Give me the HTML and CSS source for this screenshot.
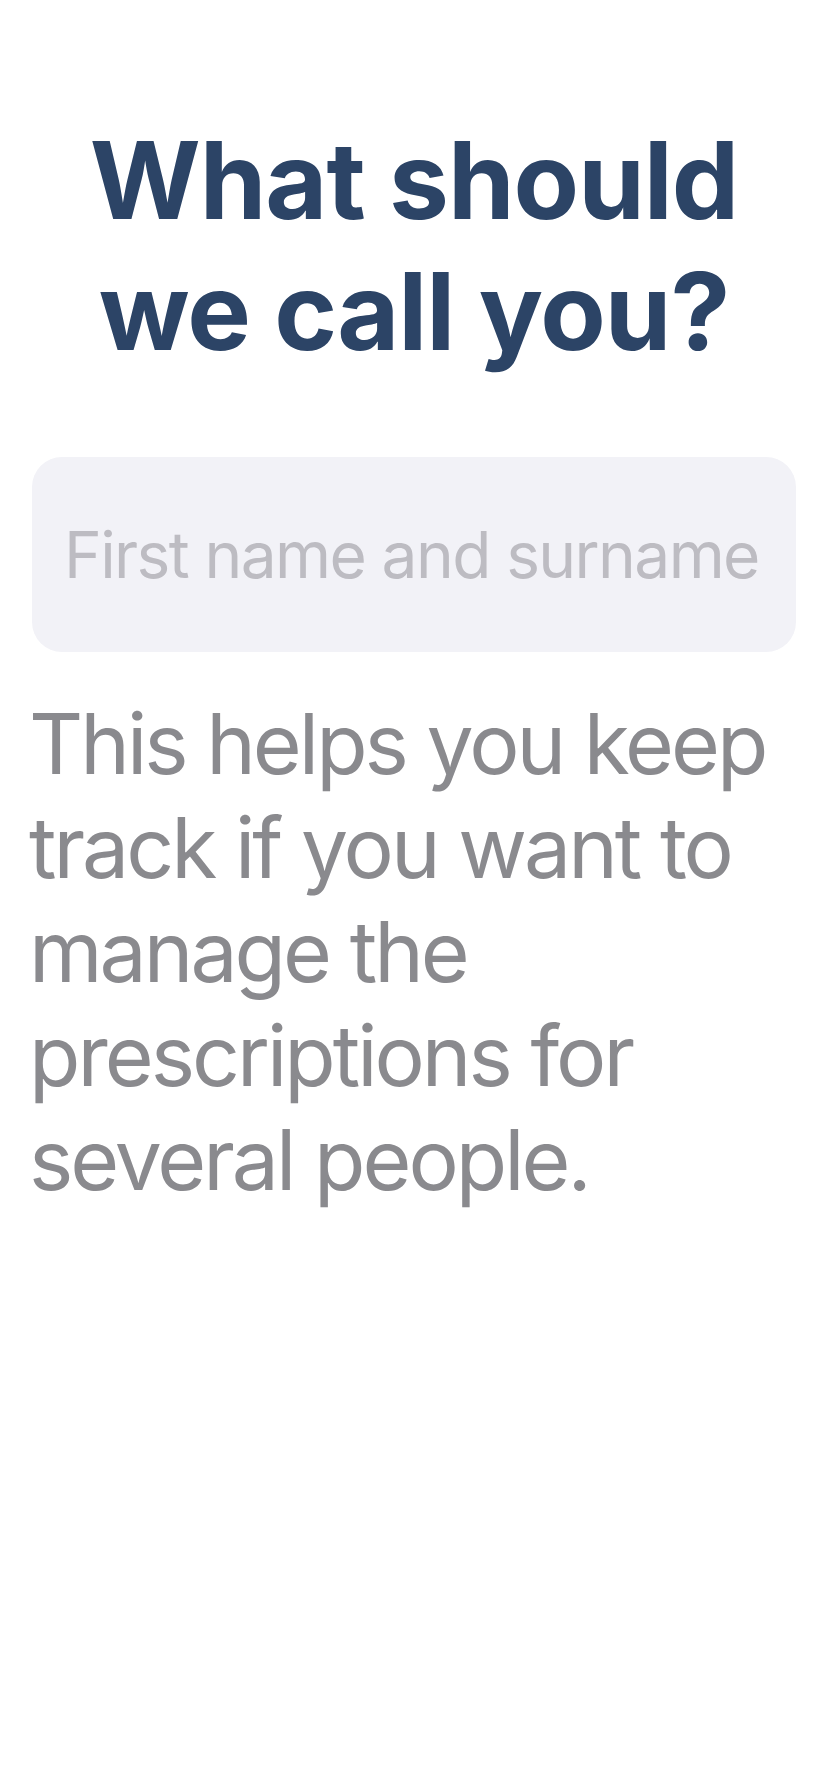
FILE: index.html
```html
<!DOCTYPE html>
<html lang="en">
<head>
<meta charset="utf-8">
<title>What should we call you?</title>
<link rel="stylesheet" href="styles.css">
</head>
<body>
<main class="screen">
  <h1 class="title">What should<br>we call you?</h1>
  <input class="name-field" type="text" placeholder="First name and surname">
  <p class="hint">This helps you keep track if you want to manage the prescriptions for several people.</p>
</main>
</body>
</html>
```
FILE: styles.css
```css
html, body {
  margin: 0;
  padding: 0;
  background: #ffffff;
}

body {
  width: 828px;
  min-height: 1792px;
  font-family: Inter, "Noto Sans", "Liberation Sans", sans-serif;
}

.screen {
  display: flex;
  flex-direction: column;
  padding: 115px 32px 0 32px;
}

.title {
  margin: 0;
  text-align: center;
  font-size: 107px;
  line-height: 131px;
  font-weight: 700;
  letter-spacing: -1px;
  color: #2c4466;
}

.name-field {
  margin-top: 80px;
  box-sizing: border-box;
  width: 100%;
  height: 195px;
  padding: 0 32px;
  border: none;
  outline: none;
  border-radius: 30px;
  background: #f2f2f7;
  font-family: Inter, "Noto Sans", "Liberation Sans", sans-serif;
  font-size: 64px;
  letter-spacing: -1.6px;
  color: #1c1c1e;
}

.name-field::placeholder {
  color: #bdbcc2;
  opacity: 1;
}

.hint {
  margin: 40px 0 0 -3px;
  font-size: 84px;
  line-height: 104px;
  font-weight: 400;
  letter-spacing: -3px;
  color: #8a8a8e;
}
```
